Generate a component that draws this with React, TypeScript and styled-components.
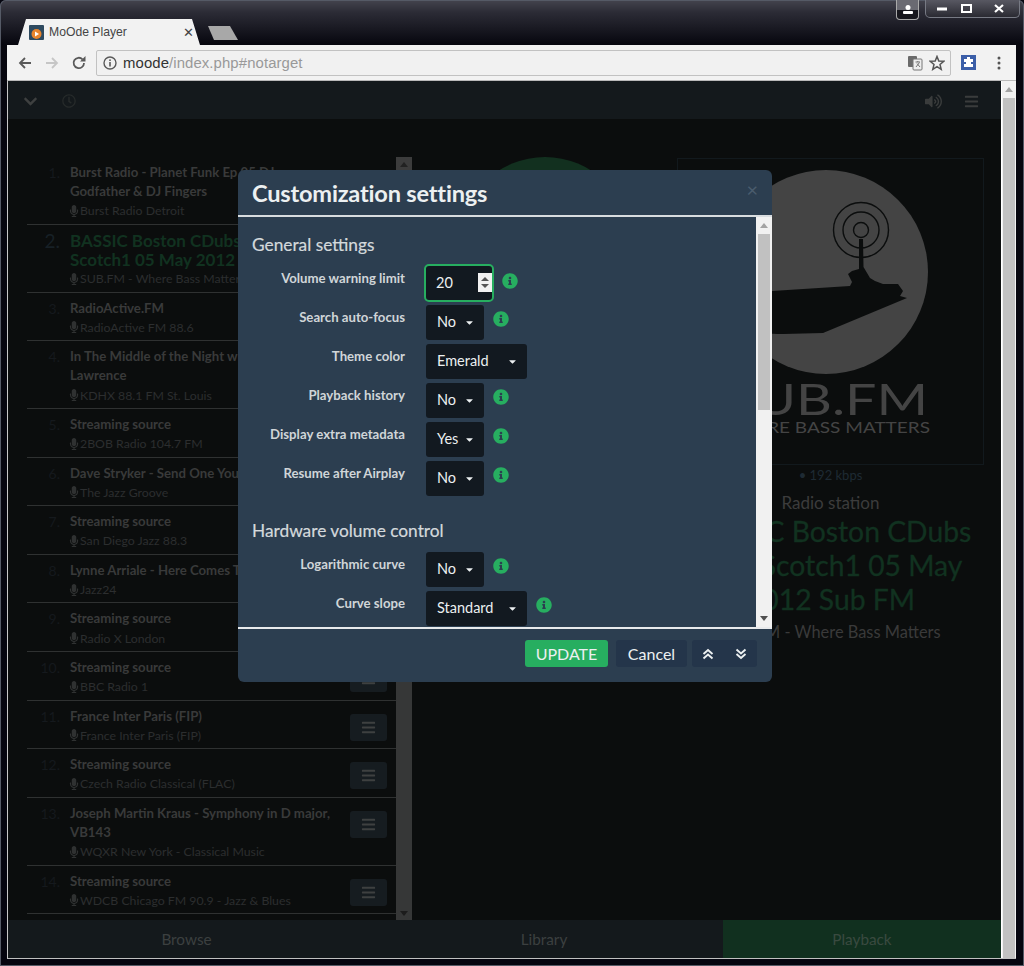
import React from 'react';
import styled, { createGlobalStyle } from 'styled-components';
import { FaBars, FaChevronDown, FaRegClock, FaVolumeUp, FaMicrophone, FaInfoCircle, FaCaretDown } from 'react-icons/fa';

const Global = createGlobalStyle`
  html, body { margin: 0; padding: 0; background: #05050f; }
  * { box-sizing: border-box; }
  body { font-family: Lato, "Open Sans", "Liberation Sans", sans-serif; }
`;

const Desktop = styled.div`
  position: relative;
  width: 1024px; height: 966px; overflow: hidden;
  padding: 1px 8px 7px 7px;
  background: linear-gradient(#44444e 0, #2c2c36 12px, #07070f 44px, #05050f 100%);
  box-shadow: inset 0 0 0 1px #555a66;
  border-radius: 6px 6px 0 0;
  display: flex; flex-direction: column;
`;
const TitleBar = styled.div`
  height: 44px; display: flex; align-items: flex-end; padding-left: 7px; flex: none;
`;
const Tab = styled.div`
  width: 194px; height: 26px; display: flex; align-items: center; gap: 5px; flex: none;
  padding: 0 14px 0 15px;
  background: #f2f2f2;
  clip-path: polygon(0 100%, 4px 100%, 12px 0, 178px 0, 186px 100%, 194px 100%);
`;
const Favicon = styled.svg` flex: none; `;
const TabTitle = styled.span` flex: 1; color: #444; font: 12.2px "Liberation Sans", sans-serif; `;
const TabClose = styled.span` font: 13px "DejaVu Sans", sans-serif; color: #444; `;
const NewTab = styled.div`
  width: 30px; height: 14px; background: #a8a8a8; margin: 0 0 5px 0; flex: none;
  clip-path: polygon(0 0, 22px 0, 30px 100%, 6px 100%);
`;
const WinControls = styled.div`
  position: absolute; top: 0; right: 4px; display: flex; gap: 6px; align-items: flex-start;
`;
const Profile = styled.div`
  width: 23px; height: 20px; border: 1px solid #aaa; border-top: none; border-radius: 0 0 4px 4px;
  background: linear-gradient(#6a6a72 0 55%, #17171d 55% 100%); display: flex; align-items: center; justify-content: center;
`;
const Caption = styled.div`
  width: 95px; height: 18px; border: 1px solid #777a84; border-top: none; border-radius: 0 0 5px 5px;
  background: linear-gradient(#585862, #2a2a32); display: grid; grid-template-columns: 32px 16px 1fr; align-items: center; justify-items: center; padding-right: 15px;
`;
const CloseGlyph = styled.svg` justify-self: end; `;
const Toolbar = styled.div`
  height: 36px; flex: none; background: #f2f2f2; display: flex; align-items: center;
  border-bottom: 1px solid #b9b9b9;
`;
const NavIcon = styled.svg` width: 16px; height: 16px; flex: none; `;
const NavSlot = styled.div`
  width: ${p => p.$w}px; display: flex; justify-content: center; flex: none; align-items: center;
`;
const Omni = styled.div`
  width: 855px; height: 26px; background: #f1f1f1; border: 1px solid #c2c2c2; border-radius: 2px;
  display: flex; align-items: center; padding: 0 5px 0 6px; font: 14.9px "Liberation Sans", sans-serif; flex: none; color: #999;
  gap: 5px;
`;
const Url = styled.div` flex: 1; letter-spacing: .1px; margin-left: 1px; `;
const UrlHost = styled.span` color: #333; `;
const Star = styled.svg` margin-left: 1px; `;
const Page = styled.div`
  flex: 1; display: flex; min-height: 0; position: relative; background: #0b0d0d; border-left: 1px solid #c8c8c8; border-bottom: 1px solid #c0c0c0;
`;
const Main = styled.div` flex: 1; display: flex; flex-direction: column; min-width: 0; `;
const TopBar = styled.div`
  height: 38px; flex: none; background: #14191c; display: flex; align-items: center; padding: 2px 22px 0 15px; color: #3e4040;
`;
const TopLeft = styled.div` display: flex; align-items: center; gap: 24px; flex: 1; `;
const TopRight = styled.div` display: flex; align-items: center; gap: 22px; `;
const Columns = styled.div` flex: 1; display: flex; min-height: 0; `;
const ListCol = styled.div`
  width: 404px; flex: none; padding-left: 19px; display: flex; overflow: hidden;
`;
const List = styled.div` width: 369px; flex: none; padding-top: 38px; `;
const Row = styled.div`
  display: flex; border-bottom: 1px solid #2f3131; padding: 6px 0 3.2px; position: relative;
`;
const Num = styled.div`
  width: 43px; flex: none; text-align: right; padding-right: 10px;
  font-size: ${p => p.$a ? 19 : 14}px; line-height: 19.2px; color: ${p => p.$a ? '#172026' : '#15191d'};
`;
const RowBody = styled.div` flex: 1; min-width: 0; padding-right: 48px; `;
const Title = styled.div`
  font-weight: 700; line-height: 19.2px; white-space: nowrap;
  font-size: ${p => p.$a ? 17 : 13.2}px;
  color: ${p => p.$a ? '#113220' : '#393a3a'};
`;
const Sub = styled.div`
  display: flex; align-items: center; font-size: 12.3px; line-height: 19.2px; color: #2c2e2f; white-space: nowrap;
`;
const Mic = styled(FaMicrophone)` margin-left: -2px; font-size: 12px; color: #2f3131; flex: none; `;
const RowMenu = styled.div`
  position: absolute; right: 9px; top: 13px; width: 37px; height: 27px; background: #161c20; border-radius: 3px;
  display: flex; align-items: center; justify-content: center; color: #3e4040; font-size: 15px;
`;
const SmallBar = styled.div`
  width: 16px; flex: none; background: #363737; margin-top: 38px; display: flex; flex-direction: column; justify-content: space-between;
`;
const SmallUp = styled.div`
  height: 14px; display: flex; align-items: center; justify-content: center; background: #3c3c3c;
  &::before { content: ''; border: 4px solid transparent; border-top: 0; border-bottom: 5px solid #222; }
`;
const SmallDown = styled.div`
  height: 14px; display: flex; align-items: center; justify-content: center;
  &::before { content: ''; border: 4px solid transparent; border-bottom: 0; border-top: 5px solid #1c1c1c; }
`;
const Player = styled.div` flex: 1; display: flex; min-width: 0; `;
const KnobCol = styled.div` width: 265px; flex: none; display: flex; justify-content: center; padding-top: 38px; `;
const Knob = styled.div` width: 172px; height: 172px; border-radius: 50%; background: #12301f; flex: none; `;
const NowCol = styled.div` width: 307px; flex: none; display: flex; flex-direction: column; align-items: center; padding-top: 39px; `;
const Cover = styled.div` width: 307px; height: 307px; border: 1px solid #12191d; flex: none; `;
const CoverArt = styled.svg` display: block; width: 100%; height: 100%; `;
const Rate = styled.div` color: #1e2a33; font-size: 13px; margin-top: 2px; line-height: 16px; `;
const Station = styled.div` color: #3c3c3c; font-size: 17px; line-height: 20px; margin-top: 10px; `;
const BigTitle = styled.div` color: #113220; font-size: 28.3px; line-height: 34px; text-align: center; margin-top: 1px; width: 307px; -webkit-text-stroke: .3px #113220; `;
const BigSub = styled.div` color: #3a3a3a; font-size: 16.4px; line-height: 20px; margin-top: 6px; `;
const BottomBar = styled.div`
  height: 38px; flex: none; display: grid; grid-template-columns: 357px 358px 1fr; background: #14191c;
`;
const BottomTab = styled.div`
  display: flex; align-items: center; justify-content: center; font-size: 15.3px;
  background: ${p => p.$a ? '#11301f' : 'transparent'}; color: ${p => p.$a ? '#3a4a40' : '#3c4040'};
`;
const PageScroll = styled.div`
  width: 15px; flex: none; background: #f1f1f1; border-left: 1px solid #fff; display: flex; flex-direction: column; align-items: center;
`;
const ScrollUp = styled.div`
  height: 17px; flex: none; display: flex; align-items: center; justify-content: center;
  &::before { content: ''; border: 4px solid transparent; border-top: 0; border-bottom: 5px solid #a3a3a3; }
`;
const ScrollDown = styled.div`
  height: 17px; flex: none; display: flex; align-items: center; justify-content: center;
  &::before { content: ''; border: 4px solid transparent; border-bottom: 0; border-top: 5px solid #505050; }
`;
const PageThumb = styled.div` flex: 1; width: 12px; background: #c1c1c1; `;

const Modal = styled.div`
  position: absolute; left: 230px; top: 89px; width: 534px; height: 512px; background: #2c3e50; border-radius: 6px;
  display: flex; flex-direction: column; overflow: hidden;
`;
const ModalHead = styled.div`
  height: 47px; flex: none; border-bottom: 2px solid #d8dcdf; padding: 7px 14px 0; position: relative;
`;
const ModalTitle = styled.div` font-size: 23.6px; line-height: 32px; font-weight: 700; color: #ecf0f1; letter-spacing: -.2px; `;
const Close = styled.div` position: absolute; right: 14px; top: 7px; font-size: 20px; line-height: 24px; color: #4a5c6d; `;
const ModalMid = styled.div` height: 410px; flex: none; display: flex; `;
const ModalBody = styled.div` flex: 1; padding: 17px 14px 0; overflow: hidden; `;
const ModalBar = styled.div`
  width: 16px; flex: none; background: #f1f1f1; display: flex; flex-direction: column; align-items: center;
`;
const ModalThumb = styled.div` width: 12px; height: 176px; background: #c1c1c1; flex: none; `;
const ModalSpacer = styled.div` flex: 1; `;
const Section = styled.div`
  font-size: 17.3px; line-height: 22px; color: #d4d9dc; -webkit-text-stroke: .2px #d4d9dc; margin-top: ${p => p.$top || 0}px; margin-bottom: ${p => p.$bottom || 0}px;
`;
const Field = styled.div`
  display: grid; grid-template-columns: 153px auto; column-gap: 21px; height: 39px; align-items: start;
`;
const Label = styled.div` text-align: right; color: #d0d5d8; font-size: 13.2px; font-weight: 700; line-height: 16px; padding-top: 6px; `;
const Control = styled.div` display: flex; align-items: center; `;
const NumberBox = styled.div`
  width: 70px; height: 38px; margin-left: -2px; background: #121920; border: 2px solid #27ae60; border-radius: 5px; color: #ecf0f1; font-size: 14.5px;
  display: flex; align-items: center; padding: 0 0 2px 10px; justify-content: space-between;
`;
const Spin = styled.div`
  width: 14px; height: 19px; margin-bottom: -1px; background: #f1f1f1; display: flex; flex-direction: column; align-items: center; justify-content: center; gap: 3px;
  &::before { content: ''; border: 4px solid transparent; border-top: 0; border-bottom: 4px solid #555; }
  &::after { content: ''; border: 4px solid transparent; border-bottom: 0; border-top: 4px solid #555; }
`;
const Select = styled.div`
  width: ${p => p.$w}px; height: 35px; background: #121920; border-radius: 3px; color: #ecf0f1; font-size: 14.5px;
  display: flex; align-items: center; padding: 0 0 2px 11px; position: relative; margin-top: 1.6px;
`;
const Caret = styled(FaCaretDown)` position: absolute; right: 9px; font-size: 11px; color: #ecf0f1; top: 12px; `;
const Info = styled(FaInfoCircle)` color: #27ae60; font-size: 16px; margin-left: ${p => p.$ml || 9}px; margin-bottom: 5px; `;
const ModalFoot = styled.div`
  flex: 1; border-top: 2px solid #e8eaec; display: flex; align-items: center; justify-content: flex-end; padding: 0 15px 4px 0; gap: 8px;
`;
const Update = styled.div`
  width: 83px; height: 27px; background: #27ae60; border-radius: 3px; color: #ecf0f1; font-size: 16px;
  display: flex; align-items: center; justify-content: center;
`;
const Cancel = styled.div`
  width: 71px; height: 27px; background: #24354a; border-radius: 3px; color: #ecf0f1; font-size: 16px;
  display: flex; align-items: center; justify-content: center;
`;
const Chevrons = styled.div`
  width: 65px; height: 27px; background: #24354a; border-radius: 3px; margin-left: -3px;
  display: grid; grid-template-columns: 1fr 1fr; align-items: center; justify-items: center;
`;

const rows: { n: string; t: string[]; s: string; a?: boolean }[] = [
  { n: '1.', t: ['Burst Radio - Planet Funk Ep 05 DJ', 'Godfather & DJ Fingers'], s: 'Burst Radio Detroit' },
  { n: '2.', t: ['BASSIC Boston CDubs with', 'Scotch1 05 May 2012'], s: 'SUB.FM - Where Bass Matters', a: true },
  { n: '3.', t: ['RadioActive.FM'], s: 'RadioActive FM 88.6' },
  { n: '4.', t: ['In The Middle of the Night with Ron', 'Lawrence'], s: 'KDHX 88.1 FM St. Louis' },
  { n: '5.', t: ['Streaming source'], s: '2BOB Radio 104.7 FM' },
  { n: '6.', t: ['Dave Stryker - Send One Your Love'], s: 'The Jazz Groove' },
  { n: '7.', t: ['Streaming source'], s: 'San Diego Jazz 88.3' },
  { n: '8.', t: ['Lynne Arriale - Here Comes The Sun'], s: 'Jazz24' },
  { n: '9.', t: ['Streaming source'], s: 'Radio X London' },
  { n: '10.', t: ['Streaming source'], s: 'BBC Radio 1' },
  { n: '11.', t: ['France Inter Paris (FIP)'], s: 'France Inter Paris (FIP)' },
  { n: '12.', t: ['Streaming source'], s: 'Czech Radio Classical (FLAC)' },
  { n: '13.', t: ['Joseph Martin Kraus - Symphony in D major,', 'VB143'], s: 'WQXR New York - Classical Music' },
  { n: '14.', t: ['Streaming source'], s: 'WDCB Chicago FM 90.9 - Jazz & Blues' },
];

const general: { l: string; v: string; w: number }[] = [
  { l: 'Search auto-focus', v: 'No', w: 58 },
  { l: 'Theme color', v: 'Emerald', w: 101 },
  { l: 'Playback history', v: 'No', w: 58 },
  { l: 'Display extra metadata', v: 'Yes', w: 58 },
  { l: 'Resume after Airplay', v: 'No', w: 58 },
];
const hardware: { l: string; v: string; w: number }[] = [
  { l: 'Logarithmic curve', v: 'No', w: 58 },
  { l: 'Curve slope', v: 'Standard', w: 101 },
];

function Art() {
  return (
    <CoverArt viewBox="0 0 305 305">
      <circle cx="148" cy="113" r="102" fill="#444" />
      <g fill="none" stroke="#0b0d0d" strokeWidth="1.4">
        <circle cx="183" cy="71" r="27.500" />
        <circle cx="183" cy="71" r="18" />
        <circle cx="183" cy="71" r="7.500" />
      </g>
      <path fill="#0b0d0d" d="M181 80 L185 80 L185.500 108 L192 119 L197 122 L205 125 L220 125 L225 132 L222 137 L229 139 L205 149 L145 174 L105 175 C85 175 65 170 48 160 L44 140 L94 132 L172 127 L174 123 L170 115 L174 112 L181 110 Z" />
      <text x="47" y="256" fontFamily="Lato, sans-serif" fontWeight="400" fontSize="42" fill="#444" textLength="203" lengthAdjust="spacingAndGlyphs">SUB.FM</text>
      <text x="44" y="274" fontFamily="Lato, sans-serif" fontWeight="400" fontSize="15" fill="#444" textLength="208" lengthAdjust="spacingAndGlyphs">WHERE BASS MATTERS</text>
    </CoverArt>
  );
}

export default function App() {
  return (
    <Desktop>
      <Global />
      <TitleBar>
        <Tab>
          <Favicon width="15" height="15" viewBox="0 0 15 15">
            <rect width="15" height="15" rx="1" fill="#2e4a60" />
            <circle cx="7.500" cy="9" r="5" fill="#e8842c" />
            <path d="M6 6.500 L10 9 L6 11.500 Z" fill="#fff" />
          </Favicon>
          <TabTitle>MoOde Player</TabTitle>
          <TabClose>✕</TabClose>
        </Tab>
        <NewTab />
      </TitleBar>
      <WinControls>
        <Profile>
          <svg width="12" height="12" viewBox="0 0 12 12"><circle cx="6" cy="3.500" r="2.500" fill="#fff" /><rect x="1" y="7" width="10" height="3" rx="1" fill="#fff" /></svg>
        </Profile>
        <Caption>
          <svg width="10" height="4" viewBox="0 0 10 4"><rect y="0.500" width="10" height="3" fill="#fff" /></svg>
          <svg width="11" height="9" viewBox="0 0 11 9"><rect x="1" y="1" width="9" height="7" fill="none" stroke="#fff" strokeWidth="2" /></svg>
          <CloseGlyph width="10" height="9" viewBox="0 0 10 9"><path d="M1 1 L9 8 M9 1 L1 8" stroke="#fff" strokeWidth="2.200" /></CloseGlyph>
        </Caption>
      </WinControls>
      <Toolbar>
        <NavSlot $w={36}>
          <NavIcon viewBox="0 0 16 16"><path d="M14 8 H3 M8 3 L3 8 L8 13" fill="none" stroke="#5a5a5a" strokeWidth="1.800" /></NavIcon>
        </NavSlot>
        <NavSlot $w={18}>
          <NavIcon viewBox="0 0 16 16"><path d="M2 8 H13 M8 3 L13 8 L8 13" fill="none" stroke="#c6c6c6" strokeWidth="1.800" /></NavIcon>
        </NavSlot>
        <NavSlot $w={35}>
          <NavIcon viewBox="0 0 16 16"><path d="M13 8 A5.200 5.200 0 1 1 11.500 4.300" fill="none" stroke="#5a5a5a" strokeWidth="1.800" /><path d="M9 6.500 L14.500 6.500 L14.500 1 Z" fill="#5a5a5a" /></NavIcon>
        </NavSlot>
        <Omni>
          <svg width="14" height="14" viewBox="0 0 14 14"><circle cx="7" cy="7" r="6" fill="none" stroke="#5a5a5a" strokeWidth="1.400" /><rect x="6.200" y="6" width="1.600" height="4.500" fill="#5a5a5a" /><rect x="6.200" y="3.400" width="1.600" height="1.600" fill="#5a5a5a" /></svg>
          <Url><UrlHost>moode</UrlHost>/index.php#notarget</Url>
          <svg width="16" height="16" viewBox="0 0 16 16"><rect x="1" y="1" width="9" height="11" rx="1" fill="#6a6a6a" /><rect x="6" y="4" width="9" height="11" rx="1" fill="#eee" stroke="#777" /><path d="M8.500 7 H13 M10.800 6 V7 M9 12 L12.500 7.500 M10 8.500 L13 12" stroke="#777" fill="none" /></svg>
          <Star width="16" height="16" viewBox="0 0 16 16"><path d="M8 1.500 L9.800 6 L14.800 6.300 L11 9.500 L12.200 14.400 L8 11.700 L3.800 14.400 L5 9.500 L1.200 6.300 L6.200 6 Z" fill="none" stroke="#555" strokeWidth="1.500" /></Star>
        </Omni>
        <NavSlot $w={35}>
          <svg width="15" height="15" viewBox="0 0 15 15"><rect width="15" height="15" fill="#3b5ea8" /><path d="M6 2 H9 V4 H12 V7 H10 V9 H12 V12 H3 V9 H5 V7 H3 V4 H6 Z" fill="#fff" /></svg>
        </NavSlot>
        <NavSlot $w={26}>
          <svg width="4" height="14" viewBox="0 0 4 14"><circle cx="2" cy="2" r="1.500" fill="#555" /><circle cx="2" cy="7" r="1.500" fill="#555" /><circle cx="2" cy="12" r="1.500" fill="#555" /></svg>
        </NavSlot>
      </Toolbar>
      <Page>
        <Main>
          <TopBar>
            <TopLeft>
              <FaChevronDown size={15} />
              <FaRegClock size={14} color="#262a2a" />
            </TopLeft>
            <TopRight>
              <FaVolumeUp size={17} color="#3a3c3c" />
              <FaBars size={15} color="#3a3c3c" />
            </TopRight>
          </TopBar>
          <Columns>
            <ListCol>
              <List>
                {rows.map(r => (
                  <Row key={r.n}>
                    <Num $a={r.a}>{r.n}</Num>
                    <RowBody>
                      {r.t.map(x => <Title key={x} $a={r.a}>{x}</Title>)}
                      <Sub><Mic />{r.s}</Sub>
                    </RowBody>
                    <RowMenu><FaBars /></RowMenu>
                  </Row>
                ))}
              </List>
              <SmallBar>
                <SmallUp />
                <SmallDown />
              </SmallBar>
            </ListCol>
            <Player>
              <KnobCol><Knob /></KnobCol>
              <NowCol>
                <Cover><Art /></Cover>
                <Rate>• 192 kbps</Rate>
                <Station>Radio station</Station>
                <BigTitle>BASSIC Boston CDubs with Scotch1 05 May 2012 Sub FM</BigTitle>
                <BigSub>SUB.FM - Where Bass Matters</BigSub>
              </NowCol>
            </Player>
          </Columns>
          <BottomBar>
            <BottomTab>Browse</BottomTab>
            <BottomTab>Library</BottomTab>
            <BottomTab $a>Playback</BottomTab>
          </BottomBar>
        </Main>
        <PageScroll>
          <ScrollUp />
          <PageThumb />
        </PageScroll>
        <Modal>
          <ModalHead>
            <ModalTitle>Customization settings</ModalTitle>
            <Close>×</Close>
          </ModalHead>
          <ModalMid>
            <ModalBody>
              <Section $bottom={8}>General settings</Section>
              <Field>
                <Label>Volume warning limit</Label>
                <Control>
                  <NumberBox>20<Spin /></NumberBox>
                  <Info $ml={8} />
                </Control>
              </Field>
              {general.map(f => (
                <Field key={f.l}>
                  <Label>{f.l}</Label>
                  <Control>
                    <Select $w={f.w}>{f.v}<Caret /></Select>
                    {f.w === 58 && <Info />}
                  </Control>
                </Field>
              ))}
              <Section $top={22} $bottom={8}>Hardware volume control</Section>
              {hardware.map(f => (
                <Field key={f.l}>
                  <Label>{f.l}</Label>
                  <Control>
                    <Select $w={f.w}>{f.v}<Caret /></Select>
                    <Info />
                  </Control>
                </Field>
              ))}
            </ModalBody>
            <ModalBar>
              <ScrollUp />
              <ModalThumb />
              <ModalSpacer />
              <ScrollDown />
            </ModalBar>
          </ModalMid>
          <ModalFoot>
            <Update>UPDATE</Update>
            <Cancel>Cancel</Cancel>
            <Chevrons>
              <svg width="12" height="12" viewBox="0 0 12 12"><path d="M1.500 6 L6 2 L10.500 6 M1.500 10.500 L6 6.500 L10.500 10.500" fill="none" stroke="#ecf0f1" strokeWidth="1.900" /></svg>
              <svg width="12" height="12" viewBox="0 0 12 12"><path d="M1.500 1.500 L6 5.500 L10.500 1.500 M1.500 6 L6 10 L10.500 6" fill="none" stroke="#ecf0f1" strokeWidth="1.900" /></svg>
            </Chevrons>
          </ModalFoot>
        </Modal>
      </Page>
    </Desktop>
  );
}
